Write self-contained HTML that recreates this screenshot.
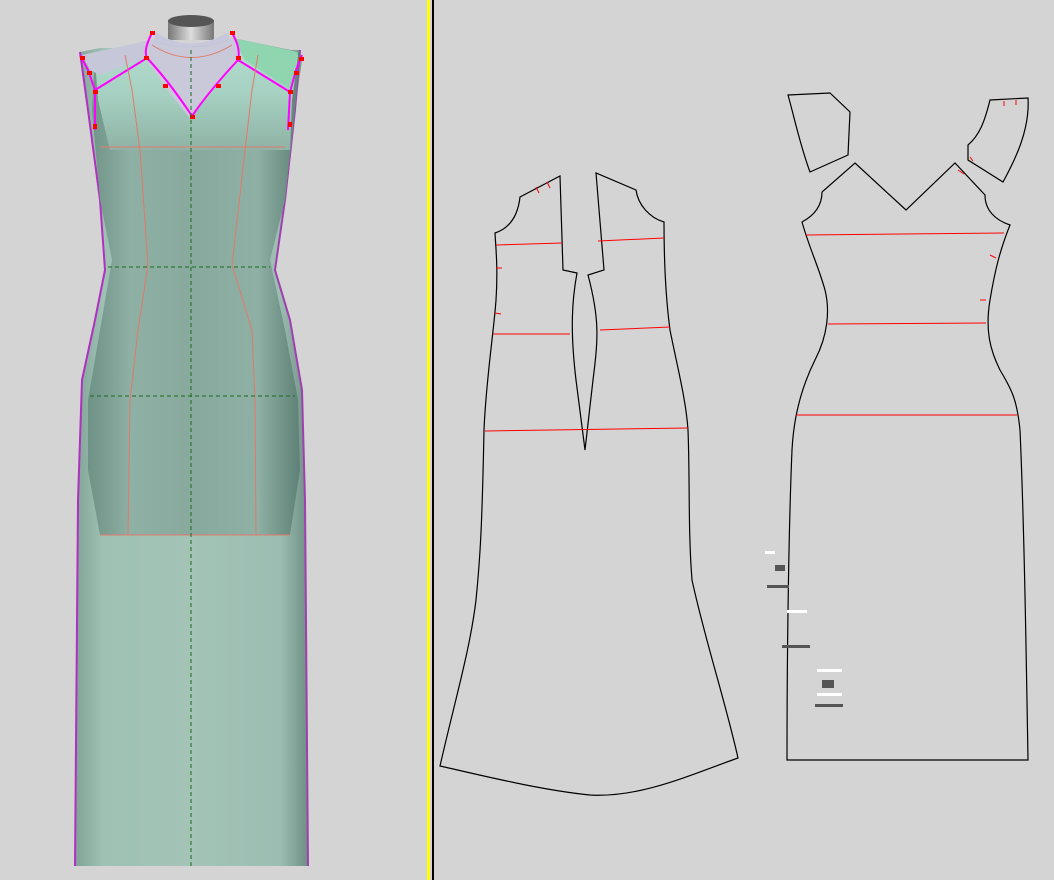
<!DOCTYPE html>
<html><head><style>
html,body{margin:0;padding:0;background:#d4d4d4;}
svg{display:block}
</style></head><body>
<svg width="1054" height="880" viewBox="0 0 1054 880" xmlns="http://www.w3.org/2000/svg">
<defs>
<linearGradient id="g1" x1="0" x2="1" y1="0" y2="0">
<stop offset="0" stop-color="#7fa396"/><stop offset="0.12" stop-color="#9fc1b4"/><stop offset="0.5" stop-color="#a3c3b7"/><stop offset="0.88" stop-color="#9cbdb1"/><stop offset="1" stop-color="#6f8f84"/>
</linearGradient>
<linearGradient id="g2" x1="0" x2="1" y1="0" y2="0">
<stop offset="0" stop-color="#6f9286"/><stop offset="0.2" stop-color="#8fb0a4"/><stop offset="0.5" stop-color="#88a99d"/><stop offset="0.8" stop-color="#8fb0a4"/><stop offset="1" stop-color="#5f8076"/>
</linearGradient>
<linearGradient id="g3" x1="0" x2="0" y1="0" y2="1">
<stop offset="0" stop-color="#b4e0d0"/><stop offset="0.5" stop-color="#a6d0c1"/><stop offset="1" stop-color="#8fb3a6"/>
</linearGradient>
<linearGradient id="neck" x1="0" x2="1" y1="0" y2="0"><stop offset="0" stop-color="#777"/><stop offset="0.5" stop-color="#ddd"/><stop offset="1" stop-color="#777"/></linearGradient>
</defs>
<rect width="1054" height="880" fill="#d4d4d4"/>
<rect x="427" y="0" width="3" height="880" fill="#ffff00"/>
<rect x="432" y="0" width="2" height="880" fill="#000"/>

<!-- outer gown -->
<path d="M80,52 L100,48 L300,50 L302,60 L295,110 L285,200 L275,270 L290,320 L302,390 L305,500 L308,866 L75,866 L78,500 L82,380 L95,320 L105,270 L100,200 L88,110 Z" fill="url(#g1)"/>
<path d="M80,52 L88,110 L100,200 L105,270 L95,320 L82,380 L78,500 L75,866" fill="none" stroke="#b030c0" stroke-width="2"/>
<path d="M300,50 L295,110 L285,200 L275,270 L290,320 L302,390 L305,500 L308,866" fill="none" stroke="#a040b0" stroke-width="2"/>
<!-- neck -->
<rect x="168" y="20" width="46" height="20" fill="url(#neck)"/>
<ellipse cx="191" cy="21" rx="23" ry="6" fill="#555"/>
<path d="M155,32 Q191,55 228,32 L232,50 Q191,60 152,50Z" fill="#c8c8dc"/>
<!-- upper bodice -->
<path d="M95,58 L150,40 Q191,55 233,38 L300,52 L295,110 L285,200 L270,260 L285,330 L298,400 L300,470 L290,535 L100,535 L88,470 L88,400 L100,330 L112,260 L100,200 L92,110 Z" fill="url(#g2)"/>
<path d="M95,60 L150,42 Q191,55 233,40 L298,55 L292,100 L290,150 L110,150 L98,100 Z" fill="url(#g3)"/>
<path d="M82,55 L150,40 L145,58 L100,75 L90,70 Z" fill="#c6c7d8"/>
<path d="M233,38 L298,52 L292,90 L245,60 Z" fill="#8fd6b0"/>
<path d="M150,40 Q145,58 148,62 Q170,95 190,118 Q212,90 238,62 Q240,45 233,38 Q191,55 150,40Z" fill="#c9c9da"/>
<g fill="none" stroke="#ff00ff" stroke-width="2">
<path d="M152,33 Q143,50 147,58 Q168,80 192,116 Q210,90 238,60 Q241,48 232,33"/>
<path d="M147,58 L95,90"/><path d="M238,60 L290,92"/>
<path d="M80,55 L88,70 L95,90 L95,130"/><path d="M302,55 L296,70 L290,92 L288,130"/>
</g>
<g fill="#ff0000">
<rect x="150" y="31" width="5" height="4"/><rect x="230" y="31" width="5" height="4"/>
<rect x="144" y="56" width="5" height="4"/><rect x="236" y="56" width="5" height="4"/>
<rect x="163" y="84" width="5" height="4"/><rect x="216" y="84" width="5" height="4"/>
<rect x="190" y="115" width="5" height="4"/>
<rect x="80" y="56" width="5" height="4"/><rect x="87" y="71" width="5" height="4"/><rect x="93" y="90" width="5" height="4"/><rect x="93" y="124" width="4" height="5"/>
<rect x="299" y="57" width="5" height="4"/><rect x="294" y="71" width="5" height="4"/><rect x="288" y="90" width="5" height="4"/><rect x="288" y="122" width="4" height="5"/>
</g>
<g fill="none" stroke="#e07a6a" stroke-width="1">
<path d="M125,55 L132,90 L140,150 L148,265 L138,330 L130,400 L128,535"/>
<path d="M258,55 L252,90 L245,150 L232,265 L252,330 L255,400 L256,535"/>
<path d="M100,535 L290,535"/>
<path d="M100,147 L285,147"/>
<path d="M152,45 Q191,70 232,45"/>
</g>
<g fill="none" stroke="#1a6a1a" stroke-width="1" stroke-dasharray="4,3">
<path d="M191,50 L191,866"/>
<path d="M108,267 L270,267"/>
<path d="M90,396 L295,396"/>
</g>

<!-- front pattern -->
<g fill="none" stroke="#000" stroke-width="1.2">
<path d="M440,766 C455,700 470,650 476,600 C480,560 482,530 484,430 C486,380 494,330 496,300 C498,270 496,250 495,233 C510,228 518,215 520,197 L560,176 L563,270 L577,273 C572,300 570,330 576,380 L585,450 L593,380 C598,340 600,320 588,275 L604,270 L596,173 L636,190 C638,205 650,218 664,222 C664,260 666,300 670,330 C678,370 686,400 688,430 C690,480 688,530 692,580 C705,640 725,700 738,758 C690,775 640,798 590,795 C540,790 480,775 440,766 Z"/>
</g>
<g stroke="#ff0000" stroke-width="1">
<path d="M496,245 L562,243"/><path d="M598,241 L664,238"/>
<path d="M493,334 L570,334"/><path d="M600,330 L670,327"/>
<path d="M485,431 L688,428"/>
<path d="M536,187 L539,193"/><path d="M547,182 L550,188"/>
<path d="M496,268 L502,268"/><path d="M495,313 L501,314"/>
</g>

<!-- back pattern -->
<g fill="none" stroke="#000" stroke-width="1.2">
<path d="M855,163 L906,210 L955,163 L985,195 C985,210 995,220 1010,225 C1000,250 995,270 990,300 C985,330 990,350 1000,370 C1012,390 1017,400 1020,430 C1024,520 1026,640 1028,760 L787,760 C787,640 789,520 792,450 C794,410 805,380 815,360 C828,335 830,310 825,290 C818,265 810,250 802,222 C815,215 822,205 822,192 Z"/>
<path d="M788,95 L830,93 L850,112 L848,155 L810,172 C800,145 795,120 788,95 Z"/>
<path d="M990,100 L1028,98 C1030,130 1015,160 1003,182 L968,160 L968,145 C980,135 985,120 990,100 Z"/>
</g>
<g stroke="#ff0000" stroke-width="1">
<path d="M806,235 L1004,233"/><path d="M828,324 L986,323"/><path d="M796,415 L1017,415"/>
<path d="M958,170 L964,174"/><path d="M990,255 L996,258"/><path d="M980,300 L986,300"/>
<path d="M1004,101 L1004,106"/><path d="M1016,100 L1016,105"/><path d="M970,157 L973,161"/>
</g>
<g fill="#fff"><rect x="765" y="551" width="10" height="3"/><rect x="787" y="610" width="20" height="3"/><rect x="817" y="669" width="25" height="3"/><rect x="817" y="693" width="25" height="3"/></g>
<g fill="#555"><rect x="767" y="585" width="22" height="3"/><rect x="782" y="645" width="28" height="3"/><rect x="815" y="704" width="28" height="3"/><rect x="775" y="565" width="10" height="6"/><rect x="822" y="680" width="12" height="8"/></g>
</svg>
</body></html>
